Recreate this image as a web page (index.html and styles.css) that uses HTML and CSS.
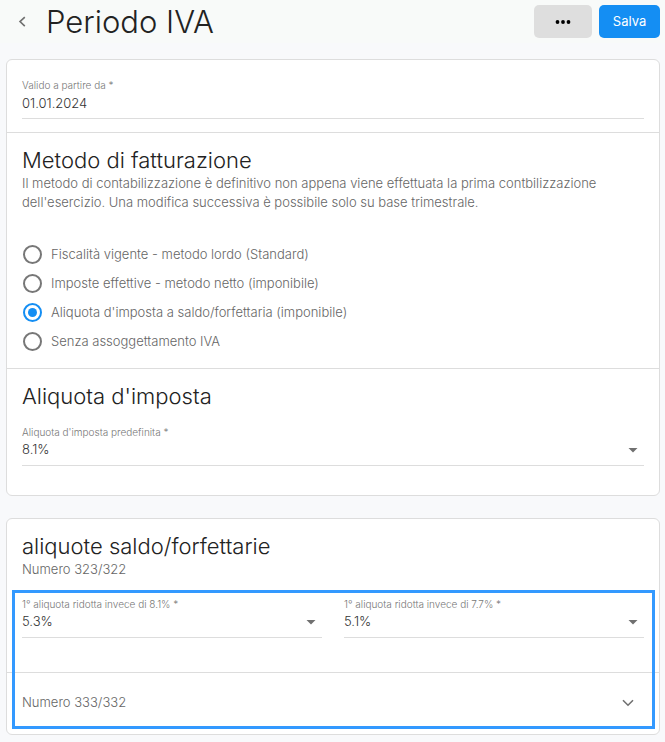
FILE: index.html
```html
<!DOCTYPE html>
<html lang="it">
<head>
<meta charset="utf-8">
<meta name="viewport" content="width=device-width, initial-scale=1">
<title>Periodo IVA</title>
<link rel="stylesheet" href="styles.css">
</head>
<body>
<header class="topbar">
  <button class="back" type="button" aria-label="Indietro">
    <svg width="8" height="12" viewBox="0 0 8 12"><path d="M6.8 1.2 2 5.6l4.8 4.6"/></svg>
  </button>
  <h1 class="title">Periodo IVA</h1>
  <button class="btn btn-more" type="button" aria-label="Altro">
    <svg width="16" height="4" viewBox="0 0 16 4"><circle cx="2.5" cy="2" r="1.9"/><circle cx="8" cy="2" r="1.9"/><circle cx="13.5" cy="2" r="1.9"/></svg>
  </button>
  <button class="btn btn-save" type="submit" form="periodo">Salva</button>
</header>

<form class="page" id="periodo">
  <div class="card">
    <section class="section section-date">
      <div class="field">
        <label class="field-label" for="valido">Valido a partire da *</label>
        <input class="field-control" id="valido" type="text" value="01.01.2024">
      </div>
    </section>

    <section class="section section-method">
      <h2 class="heading">Metodo di fatturazione</h2>
      <p class="text">Il metodo di contabilizzazione è definitivo non appena viene effettuata la prima contbilizzazione dell'esercizio. Una modifica successiva è possibile solo su base trimestrale.</p>
      <div class="radios" role="radiogroup" aria-label="Metodo di fatturazione">
        <label class="radio"><input type="radio" name="metodo">Fiscalità vigente - metodo lordo (Standard)</label>
        <label class="radio"><input type="radio" name="metodo">Imposte effettive - metodo netto (imponibile)</label>
        <label class="radio"><input type="radio" name="metodo" checked>Aliquota d'imposta a saldo/forfettaria (imponibile)</label>
        <label class="radio"><input type="radio" name="metodo">Senza assoggettamento IVA</label>
      </div>
    </section>

    <section class="section section-rate">
      <h2 class="heading">Aliquota d'imposta</h2>
      <div class="field">
        <label class="field-label" for="aliquota">Aliquota d'imposta predefinita *</label>
        <select class="field-control" id="aliquota"><option>8.1%</option></select>
        <svg class="arrow" width="10" height="5" viewBox="0 0 10 5"><path d="M.5 0h9L5 4.5z"/></svg>
      </div>
    </section>
  </div>

  <div class="card">
    <section class="section section-flat">
      <h2 class="heading">aliquote saldo/forfettarie</h2>
      <p class="text">Numero 323/322</p>
      <div class="columns">
        <div class="field">
          <label class="field-label" for="rid81">1° aliquota ridotta invece di 8.1% *</label>
          <select class="field-control" id="rid81"><option>5.3%</option></select>
          <svg class="arrow" width="10" height="5" viewBox="0 0 10 5"><path d="M.5 0h9L5 4.5z"/></svg>
        </div>
        <div class="field">
          <label class="field-label" for="rid77">1° aliquota ridotta invece di 7.7% *</label>
          <select class="field-control" id="rid77"><option>5.1%</option></select>
          <svg class="arrow" width="10" height="5" viewBox="0 0 10 5"><path d="M.5 0h9L5 4.5z"/></svg>
        </div>
      </div>
    </section>
    <button class="expander" type="button" aria-expanded="false">
      <span>Numero 333/332</span>
      <svg width="12" height="8" viewBox="0 0 12 8"><path d="M1 1.2l5 5 5-5"/></svg>
    </button>
    <div class="highlight"></div>
  </div>
</form>
</body>
</html>
```
FILE: styles.css
```css
* {
  box-sizing: border-box;
}

body {
  margin: 0;
  background: #f8f9fb;
  color: #666;
  font: 300 13px/19px Inter, "Liberation Sans", sans-serif;
}

h1, h2, p {
  margin: 0;
  font-weight: 300;
}

button, input, select {
  font: inherit;
  color: inherit;
}

.topbar {
  display: flex;
  align-items: center;
  height: 43px;
  padding: 0 5px 0 14px;
  background: #f8faf9;
}

.back {
  display: flex;
  width: 32px;
  padding: 0 0 0 4px;
  border: 0;
  background: none;
}

.back path,
.expander path {
  fill: none;
  stroke: #707070;
  stroke-width: 1.6;
}

.title {
  flex: 1;
  color: #222;
  font-size: 31px;
  line-height: 43px;
}

.btn {
  display: flex;
  align-items: center;
  justify-content: center;
  height: 33px;
  border: 0;
  border-radius: 5px;
}

.btn-more {
  width: 58px;
  margin-right: 7px;
  background: #dedede;
}

.btn-save {
  width: 61px;
  background: #148ef3;
  color: #fff;
  font-weight: 400;
}

.page {
  display: flex;
  flex-direction: column;
  gap: 22px;
  padding: 16px 5px 7px 6px;
}

.card {
  position: relative;
  border: 1px solid #ddd;
  border-radius: 6px;
  background: #fff;
}

.section {
  padding: 13px 15px 0;
}

.section + .section,
.expander {
  border-top: 1px solid #ddd;
}

.section-date {
  padding-top: 19px;
  padding-bottom: 13px;
}

.section-method {
  padding-bottom: 12px;
}

.section-rate {
  padding-bottom: 29px;
}

.section-flat {
  padding-bottom: 34px;
}

.heading {
  color: #222;
  font-size: 22px;
  line-height: 28px;
}

.heading + .field {
  margin-top: 16px;
}

.field {
  position: relative;
}

.field-label {
  display: block;
  color: #777;
  font-size: 10px;
  line-height: 12px;
}

.field-control {
  display: block;
  width: 100%;
  height: 28px;
  padding: 0 0 4px;
  border: 0;
  border-bottom: 1px solid #ddd;
  border-radius: 0;
  outline: 0;
  appearance: none;
  background: none;
  color: #333;
}

.arrow {
  position: absolute;
  right: 6px;
  bottom: 13px;
  fill: #707070;
  pointer-events: none;
}

.radios {
  margin-top: 28px;
}

.radio {
  display: flex;
  align-items: center;
  gap: 9px;
  height: 29px;
}

.radio input {
  display: grid;
  place-items: center;
  width: 19px;
  height: 19px;
  margin: 0 0 0 1px;
  border: 2px solid #777;
  border-radius: 50%;
  appearance: none;
}

.radio input:checked {
  border-color: #148ef3;
}

.radio input:checked::before {
  content: "";
  width: 9px;
  height: 9px;
  border-radius: 50%;
  background: #148ef3;
}

.columns {
  display: grid;
  grid-template-columns: 1fr 1fr;
  gap: 22px;
  margin-top: 19px;
}

.expander {
  display: flex;
  align-items: center;
  justify-content: space-between;
  width: 100%;
  padding: 20px 25px 22px 15px;
  border-width: 1px 0 0;
  background: none;
}

.highlight {
  position: absolute;
  inset: 71px 4px 5px 5px;
  border: 3px solid #3399ff;
  pointer-events: none;
}
```
